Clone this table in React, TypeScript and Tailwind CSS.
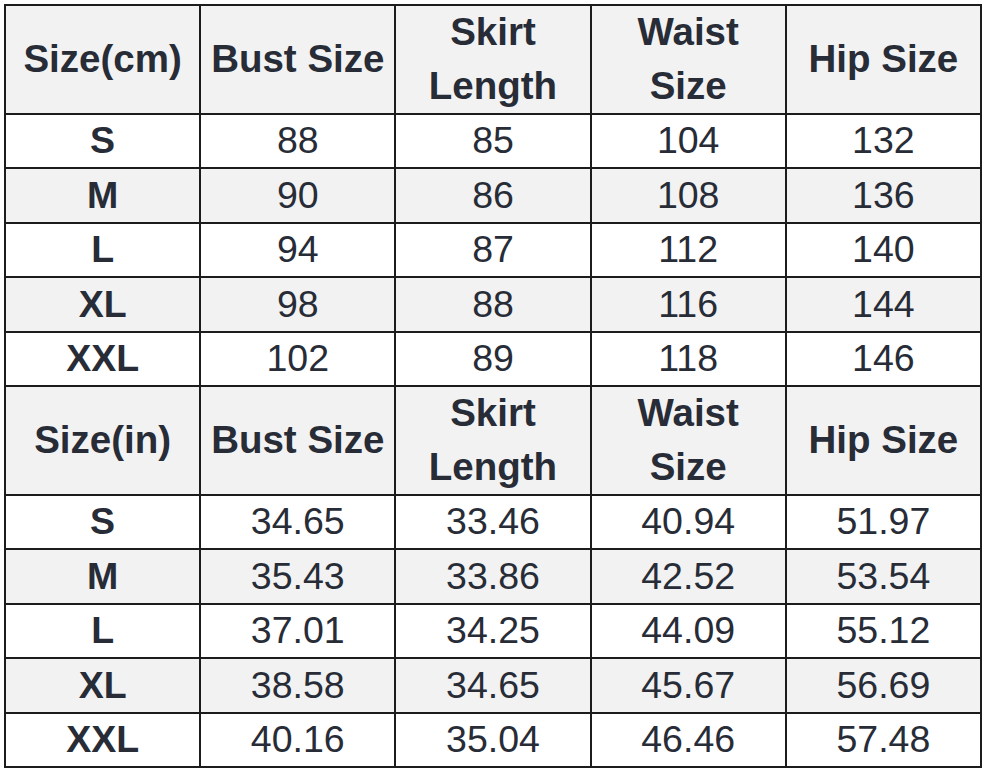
import React from 'react';

const headers = ['Bust Size', 'Skirt Length', 'Waist Size', 'Hip Size'];

const cmRows = [
    ['S', '88', '85', '104', '132'],
    ['M', '90', '86', '108', '136'],
    ['L', '94', '87', '112', '140'],
    ['XL', '98', '88', '116', '144'],
    ['XXL', '102', '89', '118', '146'],
];

const inRows = [
    ['S', '34.65', '33.46', '40.94', '51.97'],
    ['M', '35.43', '33.86', '42.52', '53.54'],
    ['L', '37.01', '34.25', '44.09', '55.12'],
    ['XL', '38.58', '34.65', '45.67', '56.69'],
    ['XXL', '40.16', '35.04', '46.46', '57.48'],
];

function HeaderRow({ first }: { first: string }) {
    const cells = [first, ...headers];
    return (
        <>
            {cells.map((h) => (
                <div
                    key={h}
                    className="flex h-[108.5px] items-center justify-center border-r-2 border-b-2 border-[#1c1c1c] bg-[#f2f2f2] px-2 text-center text-[38.5px] font-bold leading-[54px]"
                >
                    <span className="w-[5.2em]">{h}</span>
                </div>
            ))}
        </>
    );
}

function DataRows({ rows }: { rows: string[][] }) {
    return (
        <>
            {rows.map((row, i) =>
                row.map((v, j) => (
                    <div
                        key={`${i}-${j}`}
                        className={`flex h-[54.5px] items-center justify-center border-r-2 border-b-2 border-[#1c1c1c] text-[37.5px] leading-none ${
                            i % 2 === 1 ? 'bg-[#f2f2f2]' : 'bg-white'
                        } ${j === 0 ? 'font-bold' : ''}`}
                    >
                        {v}
                    </div>
                ))
            )}
        </>
    );
}

export default function App() {
    return (
        <div className="h-[770px] w-[987px] bg-white pt-[4px] pl-[4px] font-['Liberation_Sans',Arial,sans-serif] text-[#272c37]">
            <div className="grid w-[978px] grid-cols-5 border-t-2 border-l-2 border-[#1c1c1c]">
                <HeaderRow first="Size(cm)" />
                <DataRows rows={cmRows} />
                <HeaderRow first="Size(in)" />
                <DataRows rows={inRows} />
            </div>
        </div>
    );
}
